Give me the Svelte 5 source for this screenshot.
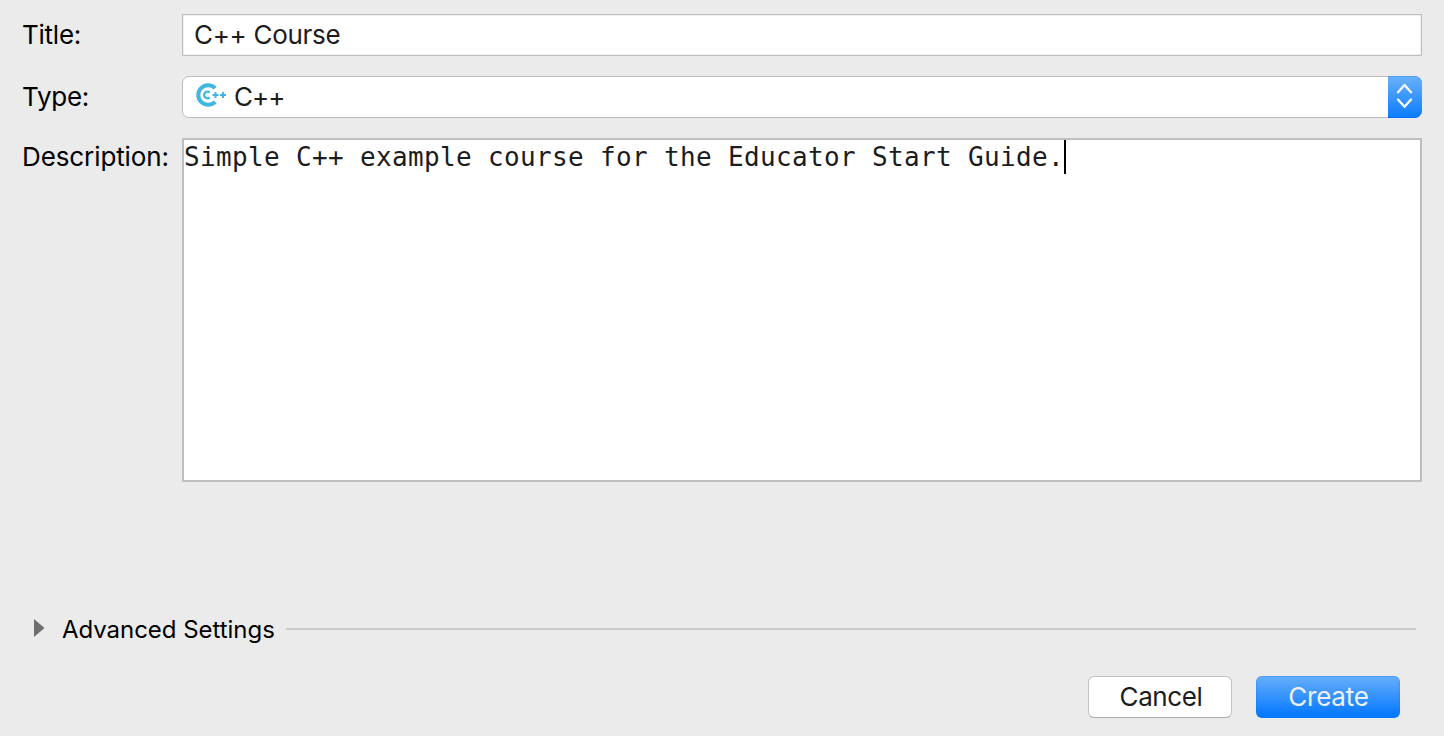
<script>
  let title = $state('C++ Course');
  let description = $state('Simple C++ example course for the Educator Start Guide.');
</script>

<main class="dialog">
  <section class="form">
    <span class="label title-label">Title:</span>
    <div class="field"><span class="title-text">{title}</span></div>

    <span class="label type-label">Type:</span>
    <div class="select">
      <svg class="logo" width="32" height="26" viewBox="0 0 32 26" fill="none" stroke="#40b6e0">
        <path d="M20.2 6.1A9.9 9.8 0 1 0 20.2 19.9" stroke-width="4" />
        <path d="M14.7 10.6A3.3 3.3 0 1 0 14.7 15.4" stroke-width="2.3" />
        <path d="M17.5 13h6M20.5 10v6M25 13h6M28 10v6" stroke-width="2" />
      </svg>
      <span class="type-text">C++</span>
      <span class="stepper">
        <svg width="34" height="42" viewBox="0 0 34 42" fill="none" stroke="#fff" stroke-width="2.3" stroke-linecap="round" stroke-linejoin="round">
          <path d="M10 16.2L16.5 9L23 16.2M10 23.6L16.5 30.8L23 23.6" />
        </svg>
      </span>
    </div>

    <span class="label description-label">Description:</span>
    <div class="area"><span class="mono">{description}</span><span class="caret"></span></div>
  </section>

  <section class="advanced">
    <svg class="triangle" width="11" height="18" viewBox="0 0 11 18"><path d="M0 0V18L10.5 9Z" fill="#6e6e6e" /></svg>
    <span class="advanced-text">Advanced Settings</span>
    <span class="rule"></span>
  </section>

  <footer>
    <button class="cancel"><span>Cancel</span></button>
    <button class="create"><span>Create</span></button>
  </footer>
</main>

<style>
  :global(body) { background: #ebebeb; }
  .dialog {
    box-sizing: border-box;
    width: 1444px;
    height: 736px;
    padding: 14px 22px 18px;
    display: flex;
    flex-direction: column;
    background: #ebebeb;
    font: 26px/32px Inter, sans-serif;
    font-feature-settings: "calt" 0;
    color: #000;
    overflow: hidden;
  }
  .form {
    display: grid;
    grid-template-columns: 160px 1240px;
    grid-template-rows: 42px 42px 344px;
    row-gap: 20px;
    align-items: center;
  }
  .label { white-space: nowrap; letter-spacing: -.1px; }
  .title-label, .type-label { letter-spacing: -.25px; }
  .description-label { align-self: start; padding-top: 3px; }
  .field, .select, .area {
    box-sizing: border-box;
    height: 100%;
    display: flex;
    align-items: center;
    background: #fff;
    color: #1c1c1c;
  }
  .field { border: 1px solid #bebebe; box-shadow: inset 0 0 0 1px #f0f0f0; padding-left: 11px; }
  .title-text { letter-spacing: -.3px; }
  .select { border: 1px solid #bebebe; border-radius: 7px; padding-left: 12px; }
  .logo { margin-top: -4px; }
  .type-text { margin-left: 7px; letter-spacing: -1px; }
  .stepper {
    width: 34px;
    height: 42px;
    margin: -1px -1px -1px auto;
    border-radius: 0 8px 8px 0;
    background: linear-gradient(#69b1fa, #0a7cff);
    box-shadow: inset 0 1px #539ff5, inset 0 -1px #096df5;
  }
  .stepper svg { display: block; }
  .area { border: 2px solid #bebebe; align-items: flex-start; }
  .mono {
    font: 26px/32px "DejaVu Sans Mono", monospace;
    letter-spacing: .347px;
    padding-top: 1px;
    white-space: pre;
  }
  .caret { width: 2px; height: 34px; background: #000; }
  .advanced {
    display: flex;
    align-items: center;
    height: 32px;
    margin-top: 131px;
    padding: 0 6px 0 12px;
    font-size: 24px;
  }
  .triangle { margin-top: -2px; }
  .advanced-text { width: 212px; margin-left: 17px; padding-top: 2px; white-space: nowrap; letter-spacing: -.04px; }
  .rule { flex: 1; height: 2px; margin-left: 12px; background: #cbcbcb; }
  footer { display: flex; justify-content: flex-end; gap: 24px; margin-top: auto; padding-right: 22px; }
  button {
    box-sizing: border-box;
    width: 144px;
    height: 42px;
    padding: 0 0 0 2px;
    border: 1px solid #c3c3c3;
    border-bottom-color: #aaa;
    border-radius: 6px;
    background: #fff;
    font: inherit;
    letter-spacing: -.4px;
    color: #1c1c1c;
  }
  .create {
    border: 0;
    padding-left: 1px;
    letter-spacing: -.2px;
    background: linear-gradient(#66affa, #0a7bff 90%);
    box-shadow: inset 0 0 0 1px #0a6cf540;
    color: #f0f0f0;
  }
</style>
